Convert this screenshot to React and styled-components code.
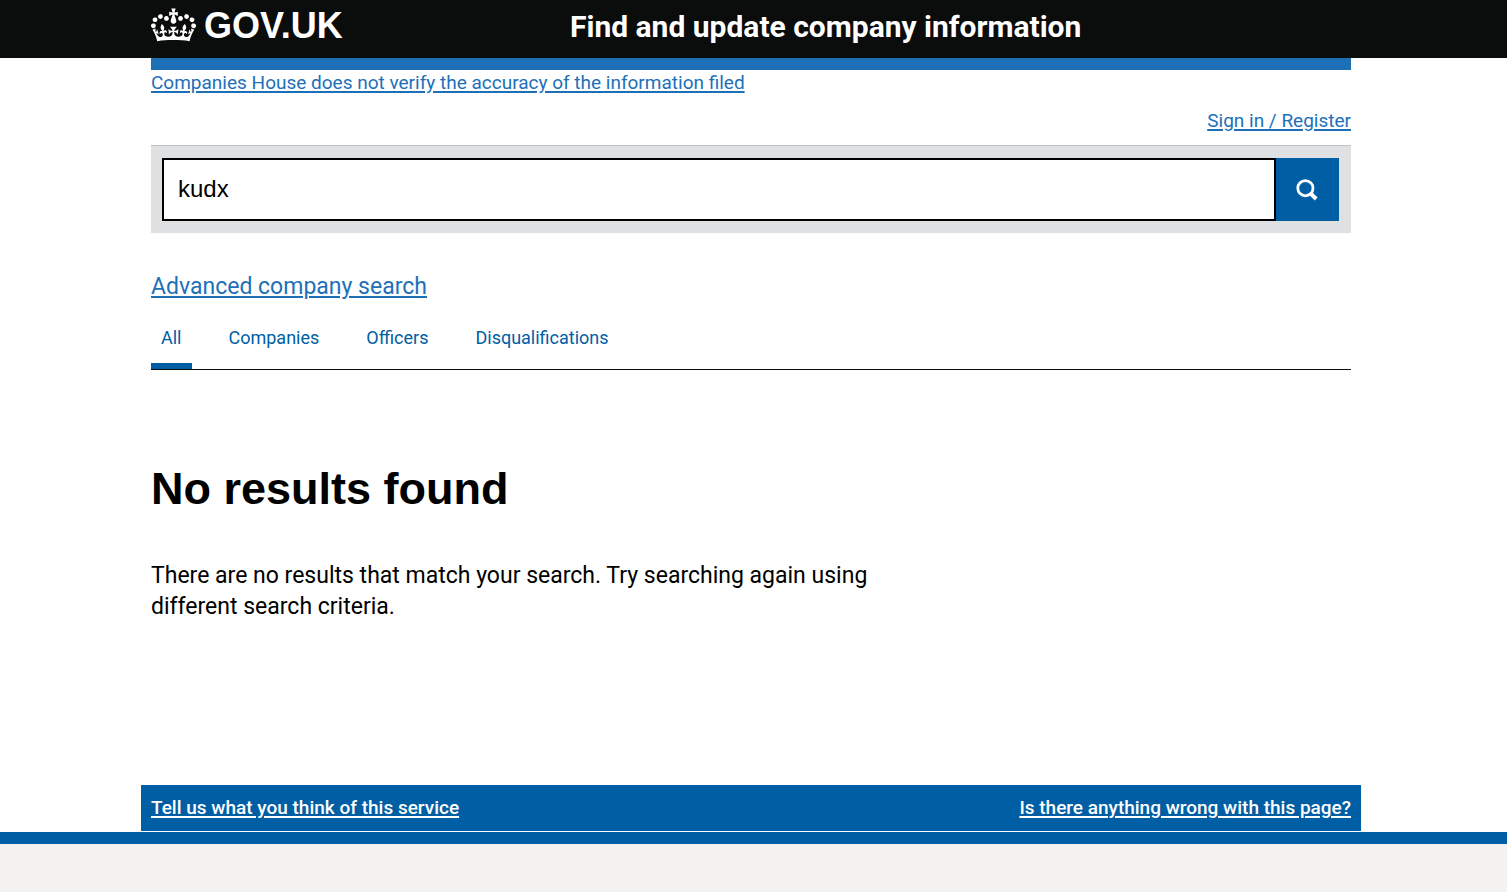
import { useState } from "react";
import styled, { createGlobalStyle } from "styled-components";

const tabs = ["All", "Companies", "Officers", "Disqualifications"];

export default function App() {

  const [query, setQuery] = useState("kudx");
  const [activeTab, setActiveTab] = useState("All");

  return (
    <>
      <GlobalStyle />
      <Page>
        <Header>
          <HeaderInner>
            <Logo href="#">
              <Crown viewBox="0 0 132 97" aria-hidden="true">
                <path
                  fill="currentColor"
                  fillRule="evenodd"
                  d="M25 30.2c3.5 1.5 7.7-.2 9.1-3.7 1.5-3.6-.2-7.8-3.9-9.2-3.6-1.4-7.6.3-9.1 3.9-1.4 3.5.3 7.5 3.9 9zM9 39.5c3.6 1.5 7.8-.2 9.2-3.7 1.5-3.6-.2-7.8-3.9-9.1-3.6-1.5-7.6.2-9.1 3.8-1.4 3.5.3 7.5 3.8 9zM4.4 57.2c3.5 1.5 7.7-.2 9.1-3.8 1.5-3.6-.2-7.7-3.9-9.1-3.5-1.5-7.6.3-9.1 3.8-1.4 3.5.3 7.6 3.9 9.1zm38.3-21.4c3.5 1.5 7.7-.2 9.1-3.8 1.5-3.6-.2-7.7-3.9-9.1-3.6-1.5-7.6.3-9.1 3.8-1.3 3.6.4 7.7 3.9 9.1zm64.4-5.6c-3.6 1.5-7.8-.2-9.1-3.7-1.5-3.6.2-7.8 3.8-9.2 3.6-1.4 7.7.3 9.2 3.9 1.3 3.5-.4 7.5-3.9 9zm15.9 9.3c-3.6 1.5-7.7-.2-9.1-3.7-1.5-3.6.2-7.8 3.7-9.1 3.6-1.5 7.7.2 9.2 3.8 1.5 3.5-.3 7.5-3.8 9zm4.7 17.7c-3.6 1.5-7.8-.2-9.2-3.8-1.5-3.6.2-7.7 3.9-9.1 3.6-1.5 7.7.3 9.2 3.8 1.3 3.5-.4 7.6-3.9 9.1zM89.3 35.8c-3.6 1.5-7.8-.2-9.2-3.8-1.4-3.6.2-7.7 3.9-9.1 3.6-1.5 7.7.3 9.2 3.8 1.4 3.6-.3 7.7-3.9 9.1zM69.7 17.7l8.9 4.7V9.3l-8.9 2.8c-.2-.3-.5-.6-.9-.9L72.4 0H59.6l3.5 11.2c-.3.3-.6.5-.9.9l-8.8-2.8v13.1l8.8-4.7c.3.3.6.7.9.9l-5 15.4v.1c-.2.8-.4 1.6-.4 2.4 0 4.1 3.1 7.5 7 8.1h.2c.3 0 .7.1 1 .1.4 0 .7 0 1-.1h.2c4-.6 7.1-4.1 7.1-8.1 0-.8-.1-1.7-.4-2.4V34l-5.1-15.4c.4-.2.7-.6 1-.9zM66 92.8c16.9 0 32.8 1.1 47.1 3.2 4-16.9 8.9-26.7 14-33.5l-9.6-3.4c1 4.9 1.1 7.2 0 10.2-1.5-1.4-3-4.3-4.2-8.7L108.6 76c2.8-2 5-3.2 7.5-3.3-4.4 9.4-10 11.9-13.6 11.2-4.3-.8-6.3-4.6-5.6-7.9 1-4.7 5.7-5.9 8-.5 4.3-8.7-3-11.4-7.6-8.8 7.1-7.2 7.9-13.5 2.1-21.1-8 6.1-8.1 12.3-4.5 20.8-4.7-5.4-12.1-2.5-9.5 6.2 3.4-5.2 7.9-2 7.2 3.1-.6 4.3-6.4 7.8-13.5 7.2-10.3-.9-10.9-8-11.2-13.8 2.5-.5 7.1 1.8 11 7.3L80.2 60c-4.1 4.4-8 5.3-12.3 5.4 1.4-4.4 8-11.6 8-11.6H55.5s6.4 7.2 7.9 11.6c-4.2-.1-8-1-12.3-5.4l1.4 16.4c3.9-5.5 8.5-7.7 10.9-7.3-.3 5.8-.9 12.8-11.1 13.8-7.2.6-12.9-2.9-13.5-7.2-.7-5 3.8-8.3 7.1-3.1 2.7-8.7-4.6-11.6-9.4-6.2 3.7-8.5 3.6-14.7-4.6-20.8-5.8 7.6-5 13.9 2.2 21.1-4.7-2.6-11.9.1-7.7 8.8 2.3-5.5 7.1-4.2 8.1.5.7 3.3-1.3 7.1-5.7 7.9-3.5.7-9-1.8-13.5-11.2 2.5.1 4.7 1.3 7.5 3.3l-4.7-15.4c-1.2 4.4-2.7 7.2-4.3 8.7-1.1-3-.9-5.3 0-10.2l-9.5 3.4c5 6.9 9.9 16.7 14 33.5 14.8-2.1 30.8-3.2 47.7-3.2z"
                />
              </Crown>
              GOV.UK
            </Logo>
            <ServiceName href="#">Find and update company information</ServiceName>
          </HeaderInner>
        </Header>

        <Content>
          <Main>
            <BlueBar />
            <Notice>
              <Link href="#">Companies House does not verify the accuracy of the information filed</Link>
            </Notice>
            <Account>
              <Link href="#">Sign in / Register</Link>
            </Account>

            <SearchForm role="search" onSubmit={(event) => event.preventDefault()}>
              <SearchInput
                type="text"
                name="q"
                aria-label="Search companies and officers"
                value={query}
                onChange={(event) => setQuery(event.target.value)}
              />
              <SearchButton type="submit" aria-label="Search">
                <svg width="22" height="22" viewBox="0 0 22 22" fill="none" stroke="currentColor" aria-hidden="true">
                  <circle cx="9.4" cy="9.2" r="7.6" strokeWidth="2.8" />
                  <path d="M14.8 14.6l5.4 5.4" strokeWidth="4" />
                </svg>
              </SearchButton>
            </SearchForm>

            <Advanced>
              <Link href="#">Advanced company search</Link>
            </Advanced>

            <Tabs aria-label="Search results">
              {tabs.map((tab) => (
                <Tab key={tab} href="#" $active={tab === activeTab} onClick={() => setActiveTab(tab)}>{tab}</Tab>
              ))}
            </Tabs>

            <Title>No results found</Title>
            <Message>There are no results that match your search. Try searching again using different search criteria.</Message>

            <Feedback>
              <FeedbackLink href="#">Tell us what you think of this service</FeedbackLink>
              <FeedbackLink href="#">Is there anything wrong with this page?</FeedbackLink>
            </Feedback>
          </Main>
        </Content>

        <Footer />
      </Page>
    </>
  );
}

const GlobalStyle = createGlobalStyle`
  * {
    box-sizing: border-box;
  }
  body {
    margin: 0;
    background: #ffffff;
    color: #000000;
    font-family: Roboto, "Liberation Sans", sans-serif;
  }
`;

const Page = styled.div`
  min-height: 100vh;
  display: flex;
  flex-direction: column;
`;

const Header = styled.header`
  background: #0b0c0c;
  padding-right: 5px;
`;

const HeaderInner = styled.div`
  max-width: 1200px;
  height: 58px;
  margin: 0 auto;
  padding-top: 5px;
  display: grid;
  grid-template-columns: 419px 1fr;
  align-items: start;
`;

const Logo = styled.a`
  display: flex;
  gap: 8px;
  color: #ffffff;
  font-family: "Liberation Sans", Arial, sans-serif;
  font-size: 36px;
  line-height: 42px;
  font-weight: bold;
  text-decoration: none;
`;

const Crown = styled.svg`
  width: 45px;
  height: 34px;
  margin-top: 3px;
`;

const ServiceName = styled.a`
  color: #ffffff;
  font-size: 30px;
  line-height: 44px;
  font-weight: bold;
  text-decoration: none;
`;

const Content = styled.div`
  padding-right: 5px;
`;

const Main = styled.main`
  max-width: 1200px;
  margin: 0 auto;
`;

const BlueBar = styled.div`
  height: 12px;
  background: #1d70b8;
`;

const Link = styled.a`
  color: #1d70b8;
  text-decoration: underline;
  text-decoration-thickness: 2px;
  text-underline-offset: 2px;
`;

const Notice = styled.div`
  font-size: 19px;
  line-height: 25px;
`;

const Account = styled.div`
  margin: 13px 0 12px;
  font-size: 19px;
  line-height: 25px;
  text-align: right;
`;

const SearchForm = styled.form`
  display: flex;
  padding: 12px 12px 12px 11px;
  background: #dee0e2;
  border-top: 1px solid #bfc1c3;
`;

const SearchInput = styled.input`
  flex: 1;
  min-width: 0;
  height: 63px;
  padding: 0 14px 2px;
  background: #ffffff;
  border: 2px solid #000000;
  border-radius: 0;
  color: #000000;
  font-family: "Liberation Sans", Arial, sans-serif;
  font-size: 24px;
`;

const SearchButton = styled.button`
  width: 63px;
  height: 63px;
  padding: 0 2px 0 0;
  display: flex;
  align-items: center;
  justify-content: center;
  background: #005ea5;
  border: none;
  color: #ffffff;
  cursor: pointer;
`;

const Advanced = styled.div`
  margin-top: 39px;
  font-size: 23px;
  line-height: 30px;
`;

const Tabs = styled.nav`
  margin-top: 11px;
  display: flex;
  gap: 27px;
  border-bottom: 1px solid #0b0c0c;
`;

const Tab = styled.a`
  padding: 12px 10px 13px;
  border-bottom: 6px solid ${(props) => (props.$active ? "#005ea5" : "transparent")};
  color: #005ea5;
  font-size: 18px;
  line-height: 25px;
  text-decoration: none;
`;

const Title = styled.h1`
  margin: 94px 0 0;
  font-family: "Liberation Sans", Arial, sans-serif;
  font-size: 45px;
  line-height: 50px;
  font-weight: bold;
`;

const Message = styled.p`
  max-width: 750px;
  margin: 46px 0 0;
  font-size: 23px;
  line-height: 31px;
`;

const Feedback = styled.div`
  margin: 163px -10px 1px;
  padding: 10px;
  display: flex;
  justify-content: space-between;
  background: #005ea5;
`;

const FeedbackLink = styled.a`
  color: #ffffff;
  font-size: 19px;
  line-height: 26px;
  font-weight: 500;
  text-decoration: underline;
  text-decoration-thickness: 2px;
  text-underline-offset: 2px;
`;

const Footer = styled.footer`
  flex: 1;
  background: #f3f2f1;
  border-top: 12px solid #005ea5;
`;
